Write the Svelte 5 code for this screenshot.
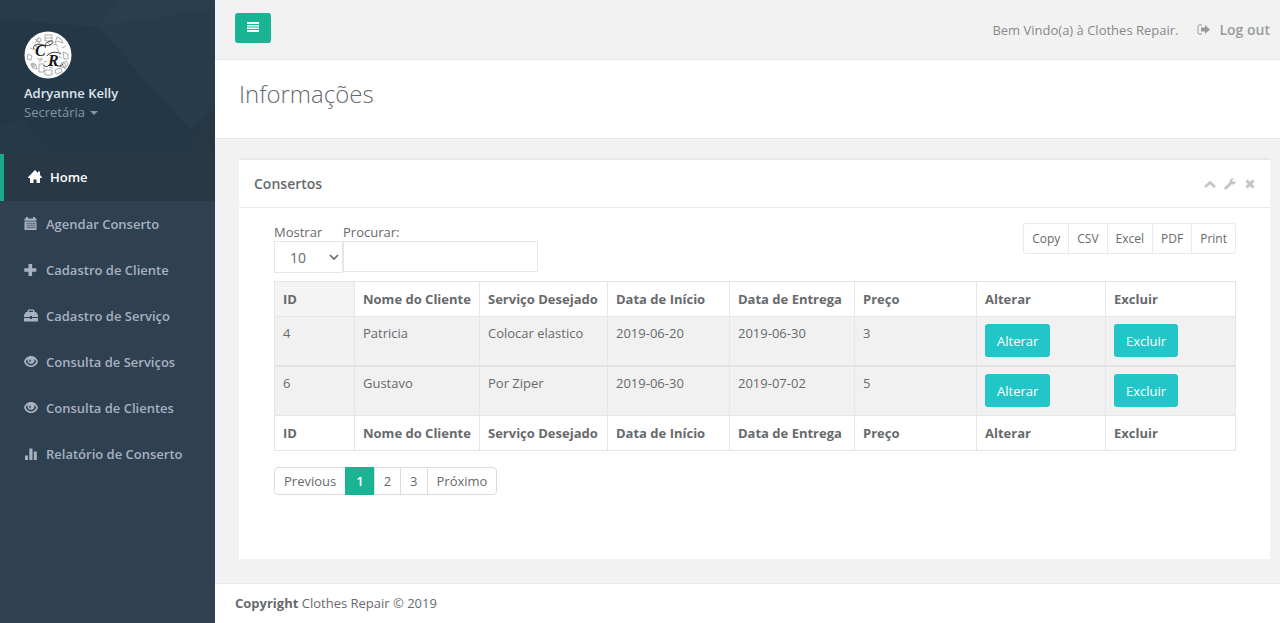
<script>
  const menu = [
    { label: 'Home', icon: 'home', active: true },
    { label: 'Agendar Conserto', icon: 'calendar' },
    { label: 'Cadastro de Cliente', icon: 'plus' },
    { label: 'Cadastro de Serviço', icon: 'briefcase' },
    { label: 'Consulta de Serviços', icon: 'eye' },
    { label: 'Consulta de Clientes', icon: 'eye' },
    { label: 'Relatório de Conserto', icon: 'stats' }
  ];
  const columns = [
    { label: 'ID', share: 80 },
    { label: 'Nome do Cliente', share: 125 },
    { label: 'Serviço Desejado', share: 128 },
    { label: 'Data de Início', share: 122 },
    { label: 'Data de Entrega', share: 125 },
    { label: 'Preço', share: 122 },
    { label: 'Alterar', share: 129 },
    { label: 'Excluir', share: 130 }
  ];
  const total = columns.reduce((sum, c) => sum + c.share, 0);
  const rows = [
    ['4', 'Patricia', 'Colocar elastico', '2019-06-20', '2019-06-30', '3'],
    ['6', 'Gustavo', 'Por Ziper', '2019-06-30', '2019-07-02', '5']
  ];
  const exports = ['Copy', 'CSV', 'Excel', 'PDF', 'Print'];
  const pages = ['Previous', '1', '2', '3', 'Próximo'];
  let current = $state('1');
  let search = $state('');
  let size = $state('10');
</script>

<div class="app">
  <aside>
    <div class="profile">
      <svg class="facets" viewBox="0 0 215 152" preserveAspectRatio="none" aria-hidden="true">
        <rect width="215" height="152" fill="#243747" />
        <path d="M0 0H118L98 27L0 19Z" fill="#273b4b" />
        <path d="M118 0H215V9L98 27Z" fill="#2a3e4d" />
        <path d="M98 27L215 9V110L190 130Z" fill="#273b4a" />
        <path d="M190 130L215 110V152H185Z" fill="#263846" />
        <path d="M0 125L25 120L50 152H0Z" fill="#263949" />
      </svg>
      <svg class="avatar" viewBox="0 0 48 48" role="img" aria-label="Clothes Repair">
        <circle cx="24" cy="24" r="23.5" fill="#fdfdfd" />
        <g fill="none" stroke="#8c8c8c" stroke-width=".7">
          <path d="M21 4h7v6h-7zM21 7h7M33 6l4 2 2 4-5-2-3 2zM38 17l4-2M39 21l5 2v5h-4zM38 33l4-3 2 3-3 5zM31 39l6-2 1 4-6 2zM21 39h7v5h-7zM15 33h5v8h-5zM8 33l4 1 1 4-4-1zM4 23l4 2-1 4-4-1zM6 17l5 2M11 8l5 4M15 7l-4 5" />
          <circle cx="9" cy="34" r="2" /><circle cx="39" cy="34" r="2.5" /><circle cx="15" cy="9" r="2" />
          <path d="M13 27l3 2 2-3M15 31l4-3M29 14l3-1 2 3M33 17l2 4M20 31l3-1M25 36l4 1M10 14l3 2M35 25l3 2M24 12l3 3" />
        </g>
        <text x="11" y="25" font-size="16" class="script">C</text>
        <text x="24" y="35" font-size="16" class="script">R</text>
        <g fill="none" stroke="#222" stroke-width=".9">
          <path d="M10 18c-2-4 4-6 9-4s10-1 10-3-6-1-8 3" />
          <path d="M20 34c1 3 5 2 8-4M32 34c3 2 6 1 7-1M23 25c2-4 10-5 14-2" />
        </g>
      </svg>
      <strong>Adryanne Kelly</strong>
      <button class="role" type="button">Secretária <i class="caret"></i></button>
    </div>
    <nav>
      {#each menu as item}
        <a href="#top" class:active={item.active}>
          <svg viewBox="0 0 14 14" aria-hidden="true">
            {#if item.icon === 'home'}
              <path d="M7 0 10 3V1.500h2V5l2 2.200V8h-2V13H8.500V9.500h-3V13H2V8H0V7.200Z" />
            {:else if item.icon === 'calendar'}
              <path d="M.5 1.500H2V0h2v1.500h5V0h2v1.500h1.500v2.200H.5zM.5 4.500h12V13H.5z" />
              <path class="cuts" d="M2 6.500h10M2 8.500h10M2 10.500h10M4 5.500v6.500M6 5.500v6.500M8 5.500v6.500M10 5.500v6.500" />
            {:else if item.icon === 'plus'}
              <path d="M4.500 1h3.600v4.200h4.200v3.600H8.100V13H4.500V8.800H.3V5.200h4.200z" />
            {:else if item.icon === 'briefcase'}
              <path fill-rule="evenodd" d="M3.500 3V1.800Q3.500.5 5 .5h4q1.500 0 1.500 1.300V3H12l2 3v2H8V7H6v1H0V6l2-3zM5 3h4V1.800H5zM0 9h6v1h2V9h6v3.500H0z" />
            {:else if item.icon === 'eye'}
              <path fill-rule="evenodd" d="M7 1c3.700 0 6 2.400 7 5.500-1 3.200-3.300 5.500-7 5.500s-6-2.300-7-5.500C1 3.400 3.300 1 7 1ZM1.800 6.300C2.600 9 4.600 10.400 7 10.400s4.400-1.400 5.200-4.100c-.5-1-1-1.700-1.900-2.300C11 7 9.600 8.800 7 8.800S3 7 3.700 4c-.9.600-1.400 1.300-1.900 2.300ZM6.500 4.500C4.800 4.700 4.800 7 6.300 7.200 6.200 6 7.500 6 6.500 4.500Z" />
            {:else}
              <path d="M1 8.500h3V13H1zM5.300 1.500h3.200V13H5.300zM9.800 4.500h3V13h-3z" />
            {/if}
          </svg>
          <span>{item.label}</span>
        </a>
      {/each}
    </nav>
  </aside>

  <div class="page" id="top">
    <header>
      <button class="toggle" type="button" aria-label="Menu">
        <svg viewBox="0 0 12 10" aria-hidden="true"><path d="M0 0h12v2H0zM0 3h12v1.500H0zM0 5.500h12V7H0zM0 8h12v2H0z" /></svg>
      </button>
      <span class="welcome">Bem Vindo(a) à Clothes Repair.</span>
      <a class="logout" href="#top">
        <svg viewBox="0 0 13 11" aria-hidden="true">
          <path d="M5 1H2Q1 1 1 2v7q0 1 1 1h3" fill="none" stroke="currentColor" />
          <path d="M4 3.500h4V1l5 4.500-5 4.500V7.500H4z" fill="currentColor" />
        </svg>
        Log out
      </a>
    </header>
    <div class="heading"><h2>Informações</h2></div>

    <main>
      <section class="panel">
        <div class="title">
          <h5>Consertos</h5>
          <div class="tools">
            <button type="button" aria-label="Recolher">
              <svg viewBox="0 0 12 12"><path d="M1 9 6 4.500 11 9" fill="none" stroke="currentColor" stroke-width="2.600" /></svg>
            </button>
            <button type="button" aria-label="Configurar">
              <svg viewBox="0 0 12 12"><path d="M1.700 10.300 7 5" stroke="currentColor" stroke-width="2.800" stroke-linecap="round" /><path fill="currentColor" d="M10.500.5 8.500 1.700v1.600l1.300.7L12 2.800c0 2.400-2 4-4.200 3.600L5.500 4.200C5.300 1.500 7.800-.3 10.500.5Z" /></svg>
            </button>
            <button type="button" aria-label="Fechar">
              <svg viewBox="0 0 12 12"><path d="m2.500 2.500 7 7m0-7-7 7" stroke="currentColor" stroke-width="3" /></svg>
            </button>
          </div>
        </div>

        <div class="content">
          <div class="controls">
            <label class="length">Mostrar
              <span class="picker">
                <select bind:value={size}><option>10</option><option>25</option><option>50</option><option>100</option></select>
                <svg viewBox="0 0 10 6" aria-hidden="true"><path d="m1 1 4 4 4-4" fill="none" stroke="currentColor" stroke-width="1.700" /></svg>
              </span>
            </label>
            <label class="search">Procurar:
              <input type="search" bind:value={search} />
            </label>
            <div class="exports">
              {#each exports as name}<button type="button">{name}</button>{/each}
            </div>
          </div>

          <table>
            <colgroup>
              {#each columns as c}<col style:width="{(c.share / total) * 100}%" />{/each}
            </colgroup>
            <thead>
              <tr>{#each columns as c}<th scope="col">{c.label}</th>{/each}</tr>
            </thead>
            <tbody>
              {#each rows as row}
                <tr>
                  {#each row as cell}<td>{cell}</td>{/each}
                  <td><button class="action" type="button">Alterar</button></td>
                  <td><button class="action" type="button">Excluir</button></td>
                </tr>
              {/each}
            </tbody>
            <tfoot>
              <tr>{#each columns as c}<th>{c.label}</th>{/each}</tr>
            </tfoot>
          </table>

          <div class="pagination">
            {#each pages as p}
              <button type="button" class:current={p === current}>{p}</button>
            {/each}
          </div>
        </div>
      </section>
    </main>

    <footer><strong>Copyright</strong> Clothes Repair © 2019</footer>
  </div>
</div>

<style>
  :global(body) {
    margin: 0;
    background: #2f4050;
    color: #676a6c;
    font: 13px/18px 'Open Sans', sans-serif;
  }
  * { box-sizing: border-box; }
  button, input, select { font: inherit; color: inherit; margin: 0; }
  button { cursor: pointer; }
  a { text-decoration: none; }
  .app { display: flex; min-height: 100vh; }

  aside { flex: 0 0 215px; background: #2f4050; }
  .profile {
    position: relative;
    display: flex;
    flex-direction: column;
    align-items: flex-start;
    padding: 31px 24px 32px;
    background: #293846;
  }
  .facets { position: absolute; inset: 0; width: 100%; height: 152px; }
  .avatar { position: relative; width: 48px; height: 48px; margin-bottom: 5px; }
  .script { font-family: 'Liberation Serif', serif; font-style: italic; font-weight: 700; fill: #151515; }
  .profile strong { position: relative; color: #dfe4ed; font-weight: 600; line-height: 19px; }
  .role {
    position: relative;
    display: flex;
    align-items: center;
    gap: 5px;
    padding: 0;
    border: 0;
    background: none;
    color: #8095a8;
    line-height: 19px;
  }
  .caret { border: 4px solid transparent; border-top-color: currentColor; border-bottom: 0; }

  nav a {
    display: flex;
    align-items: center;
    gap: 8px;
    height: 46px;
    padding-left: 24px;
    color: #a7b1c2;
    font-weight: 600;
  }
  nav a.active {
    height: 47px;
    padding-bottom: 2px;
    border-left: 4px solid #19aa8d;
    background: #293846;
    color: #fff;
  }
  nav svg { width: 14px; height: 14px; fill: currentColor; }
  nav .cuts { stroke: #2f4050; stroke-width: .4; fill: none; }

  .page { flex: 1; min-width: 0; display: flex; flex-direction: column; background: #f2f2f2; }
  header {
    display: flex;
    align-items: center;
    height: 60px;
    padding: 0 10px 0 20px;
    border-bottom: 1px solid #e7eaec;
    color: #888;
  }
  .toggle {
    display: flex;
    justify-content: center;
    width: 36px;
    height: 30px;
    padding: 9px 0;
    margin-bottom: 3px;
    border: 0;
    border-radius: 3px;
    background: #1ab394;
  }
  .toggle svg { width: 12px; height: 10px; fill: #fff; }
  .welcome { margin-left: auto; }
  .logout { display: flex; align-items: center; gap: 9px; margin-left: 19px; color: #999c9e; font-size: 14px; font-weight: 600; }
  .logout svg { width: 13px; height: 11px; }

  .heading { height: 79px; padding: 18px 24px; background: #fff; border-bottom: 1px solid #e7eaec; }
  h2 { margin: 0; font-size: 24px; font-weight: 300; line-height: 32px; }

  main { flex: 1; display: flex; padding: 19px 10px 24px 24px; }
  .panel { flex: 1; min-width: 0; background: #fff; border-top: 2px solid #e7eaec; }
  .title {
    display: flex;
    align-items: center;
    justify-content: space-between;
    height: 48px;
    padding: 0 14px 0 15px;
    border-bottom: 1px solid #e7eaec;
  }
  h5 { margin: 0; font-size: 14px; font-weight: 600; }
  .tools { display: flex; gap: 8px; color: #c4c4c4; }
  .tools button { display: flex; padding: 0; border: 0; background: none; }
  .tools svg { width: 12px; height: 12px; fill: none; }

  .content { padding: 15px 34px 32px 35px; }
  .controls { display: flex; align-items: flex-start; margin-bottom: 8px; }
  label { display: flex; flex-direction: column; }
  .length { width: 69px; }
  .picker { position: relative; display: flex; }
  select {
    appearance: none;
    width: 100%;
    height: 32px;
    padding: 2px 15px 0;
    border: 1px solid #e5e6e7;
    border-radius: 0;
    background: #fff;
    font-size: 14px;
  }
  .picker svg { position: absolute; right: 4px; top: 13px; width: 10px; height: 6px; pointer-events: none; }
  input { width: 195px; height: 31px; padding: 5px 10px; border: 1px solid #e5e6e7; border-radius: 0; background: #fff; }
  .exports { display: flex; margin-left: auto; }
  .exports button {
    height: 31px;
    padding: 0 8px;
    margin-left: -1px;
    border: 1px solid #e7eaec;
    background: #fff;
    font-size: 12px;
  }
  .exports button:first-child { border-radius: 3px 0 0 3px; }
  .exports button:last-child { border-radius: 0 3px 3px 0; }

  table { width: 100%; table-layout: fixed; border-collapse: collapse; border: 1px solid #e4e6e8; }
  th, td { padding: 8px; border: 1px solid #e4e6e8; text-align: left; vertical-align: top; white-space: nowrap; }
  th { font-weight: 700; }
  thead th:first-child { background: #f4f4f4; }
  tbody tr { background: #f1f1f1; }
  tbody td { padding-top: 7px; }
  tbody tr + tr td { border-top: 2px solid #dfe4e7; }
  .action {
    display: block;
    height: 33px;
    padding: 0 12px;
    border: 0;
    border-radius: 3px;
    background: #23c6c8;
    color: #fff;
    font-weight: 500;
  }

  .pagination { display: flex; margin-top: 16px; }
  .pagination button { height: 28px; padding: 0 9px; margin-left: -1px; border: 1px solid #ddd; background: #fff; }
  .pagination button:first-child { margin-left: 0; border-radius: 4px 0 0 4px; }
  .pagination button:last-child { border-radius: 0 4px 4px 0; }
  .pagination .current { padding: 0 10px; border-color: #1ab394; background: #1ab394; color: #fff; font-weight: 600; }

  footer { height: 40px; padding: 10px 20px; background: #fff; border-top: 1px solid #e7eaec; }
</style>
